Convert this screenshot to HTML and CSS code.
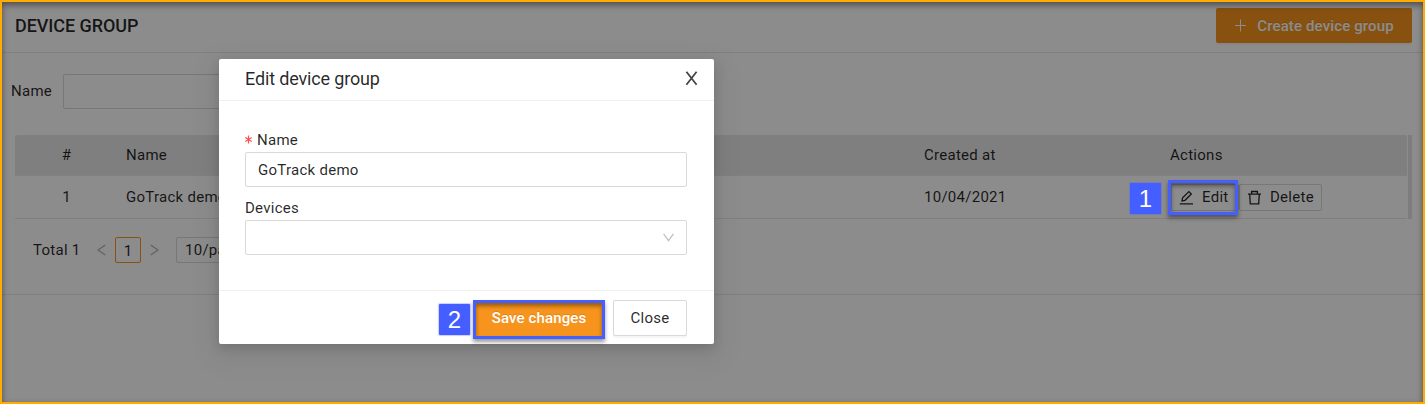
FILE: index.html
```html
<!DOCTYPE html>
<html lang="en">
<head>
<meta charset="utf-8">
<title>Device group</title>
<link rel="stylesheet" href="styles.css">
</head>
<body>
<div class="page">
  <header class="page-header">
    <h1 class="page-title">DEVICE GROUP</h1>
    <button class="btn btn-create">
      <svg class="plus" width="13" height="13" viewBox="0 0 13 13"><path d="M6.5 0.5v12M1 6.5h11" /></svg>
      <span>Create device group</span>
    </button>
  </header>
  <main class="content">
    <div class="filter"><label>Name</label><div class="filter-input"></div></div>
    <div class="table-wrap">
      <div class="table">
        <div class="row row-head"><span class="c-num">#</span><span class="c-name">Name</span><span class="c-date">Created at</span><span class="c-act">Actions</span></div>
        <div class="row row-body">
          <span class="c-num">1</span><span class="c-name">GoTrack demo</span><span class="c-date">10/04/2021</span>
          <span class="c-act actions">
            <button class="btn-sm btn-edit"><svg width="15" height="15" viewBox="0 0 15 15"><path d="M0.8 13.8h13.2M3 10.9l.6-3L9.9 1.6l2.4 2.4L6 10.3z" /></svg>Edit</button>
            <button class="btn-sm btn-delete"><svg width="15" height="15" viewBox="0 0 15 15"><path d="M1 4.1h13M2.7 4.2l.6 9.6h8.4l.6-9.6M4.6 4V1.5h5.8V4" /></svg>Delete</button>
          </span>
        </div>
      </div>
      <div class="gutter"></div>
    </div>
    <div class="pagination">
      <span class="total">Total 1</span>
      <svg class="arrow" width="9" height="12" viewBox="0 0 9 12"><path d="M8.3 1L1 6l7.3 5" /></svg>
      <span class="page-no">1</span>
      <svg class="arrow" width="9" height="12" viewBox="0 0 9 12"><path d="M.7 1L8 6 .7 11" /></svg>
      <span class="page-size">10/page</span>
    </div>
  </main>
</div>
<div class="mask"></div>
<section class="modal">
  <header class="modal-header"><h2>Edit device group</h2><svg class="close-x" width="13" height="15" viewBox="0 0 13 15"><path d="M1.4 .8l10.2 13M11.6 .8L1.4 13.8" /></svg></header>
  <div class="modal-body">
    <label class="field-label"><svg class="required" width="7" height="9" viewBox="0 0 7 9"><path d="M3.5 .5v8M.3 2.6l6.4 3.8M6.7 2.6L.3 6.4" /></svg>Name</label>
    <div class="field">GoTrack demo</div>
    <label class="field-label field-label-devices">Devices</label>
    <div class="field field-select"><svg class="chevron" width="11" height="9" viewBox="0 0 11 9"><path d="M.6 .8l4.9 6.8L10.4 .8" /></svg></div>
  </div>
  <footer class="modal-footer"><button class="btn btn-save">Save changes</button><button class="btn btn-close">Close</button></footer>
</section>
<div class="highlight highlight-edit"></div>
<div class="step step-one">1</div>
<div class="highlight highlight-save"></div>
<div class="step step-two">2</div>
<div class="frame"></div>
</body>
</html>
```
FILE: styles.css
```css
* { box-sizing: border-box; }
body {
  margin: 0;
  width: 1425px;
  height: 404px;
  position: relative;
  overflow: hidden;
  background: #fff;
  color: rgba(0, 0, 0, .85);
  font: 15px/22px Roboto, "Liberation Sans", sans-serif;
  letter-spacing: .27px;
}
svg { fill: none; stroke: currentColor; flex: none; }
button { font: inherit; letter-spacing: inherit; color: inherit; margin: 0; }
h1, h2 { margin: 0; }
.page-header {
  height: 53px;
  border-bottom: 1px solid #e8e8e8;
  padding: 0 13px 0 15px;
  display: flex;
  align-items: center;
  justify-content: space-between;
}
.page-title { font-size: 18px; font-weight: 500; letter-spacing: -.08px; }
.btn {
  height: 35px;
  border: 0;
  border-radius: 2px;
  display: flex;
  align-items: center;
  justify-content: center;
  box-shadow: 0 2px 0 rgba(0, 0, 0, .035);
}
.btn-create { width: 196px; height: 35px; margin-bottom: 1px; gap: 10px; color: #fff; background: #f7941d; font-weight: 500; letter-spacing: .13px; text-shadow: 0 -1px 0 rgba(0, 0, 0, .12); }
.content { height: 242px; border-bottom: 1px solid #e8e8e8; padding-top: 21px; }
.filter { display: flex; align-items: center; padding-left: 11px; gap: 11px; }
.filter label { padding-bottom: 2px; }
.filter-input { width: 260px; height: 35px; border: 1px solid #d9d9d9; border-radius: 2px; }
.table-wrap { display: flex; margin: 26px 13px 0 15px; gap: 1px; }
.table { flex: 1; }
.gutter { width: 4px; background: #e3e3e3; }
.row { display: grid; grid-template-columns: 111px 798px 246px 1fr; align-items: center; }
.row-head { height: 41px; background: #e8e8e8; border-bottom: 1px solid #ececec; border-radius: 2px 2px 0 0; }
.row-body { height: 43px; border-bottom: 1px solid #e8e8e8; }
.c-num { text-align: center; padding-right: 8px; }
.actions { display: flex; padding-left: 1px; }
.btn-sm { height: 27px; display: flex; align-items: center; gap: 8px; padding: 0 0 0 7px; border: 1px solid #d9d9d9; border-radius: 2px; background: #fff; }
.btn-edit { width: 68px; }
.btn-delete { width: 83px; }
.btn-sm svg { stroke-width: 1.3; }
.pagination { display: flex; align-items: center; margin: 18px 0 0 33px; height: 26px; }
.total { width: 64px; }
.arrow { color: #b0b0b0; stroke-width: 1.2; }
.page-no { width: 26px; height: 26px; margin: 0 9px; border: 1px solid #f7941d; border-radius: 2px; text-align: center; line-height: 26px; }
.page-size { width: 90px; height: 26px; margin-left: 17px; padding-left: 8px; border: 1px solid #d9d9d9; border-radius: 2px; line-height: 24px; }
.mask { position: absolute; inset: 0; background: rgba(0, 0, 0, .45); }
.modal { position: absolute; left: 219px; top: 59px; width: 495px; height: 285px; background: #fff; border-radius: 2px; box-shadow: 0 4px 12px rgba(0, 0, 0, .15), 0 9px 28px 8px rgba(0, 0, 0, .05); }
.modal-header { height: 42px; border-bottom: 1px solid #f0f0f0; padding: 0 16px 2px 26px; display: flex; align-items: center; justify-content: space-between; }
.modal-header h2 { font-size: 18px; font-weight: 400; letter-spacing: -.15px; }
.close-x { color: #444; stroke-width: 1.8; }
.modal-body { height: 189px; padding: 28px 27px 0 26px; }
.field-label { display: flex; align-items: center; gap: 5px; height: 23px; padding-bottom: 2px; }
.field-label-devices { margin-top: 10px; }
.required { color: #ff4d4f; stroke-width: 1.2; }
.field { height: 35px; border: 1px solid #d9d9d9; border-radius: 2px; padding: 0 12px; display: flex; align-items: center; }
.field-select { justify-content: flex-end; }
.chevron { color: #bfbfbf; stroke-width: 1.2; }
.modal-footer { height: 54px; border-top: 1px solid #f0f0f0; padding: 9px 27px 0 0; display: flex; justify-content: flex-end; gap: 9px; }
.btn-save { width: 130px; height: 36px; background: #f7941d; color: #fff; font-weight: 500; letter-spacing: .13px; text-shadow: 0 -1px 0 rgba(0, 0, 0, .12); }
.btn-close { width: 74px; height: 36px; border: 1px solid #d9d9d9; background: #fff; }
.highlight { position: absolute; border: 3px solid #455eff; box-shadow: 0 3px 4px rgba(0, 0, 0, .4), inset 0 3px 4px rgba(0, 0, 0, .4); }
.highlight-edit { left: 1168px; top: 180px; width: 70px; height: 35px; }
.highlight-save { left: 473px; top: 300px; width: 132px; height: 39px; }
.step { position: absolute; width: 31px; height: 31px; border-radius: 1px; background: #455eff; color: #fff; font: 24px/31px "Liberation Sans", Arial, sans-serif; letter-spacing: 0; text-align: center; box-shadow: 0 0 1px 1px rgba(69, 94, 255, .3); }
.step-one { left: 1130px; top: 183px; }
.step-two { left: 439px; top: 304px; }
.frame { position: absolute; inset: 0; border: 2px solid #ffab00; box-shadow: inset 0 3px 6px rgba(0, 0, 0, .45); }
```
